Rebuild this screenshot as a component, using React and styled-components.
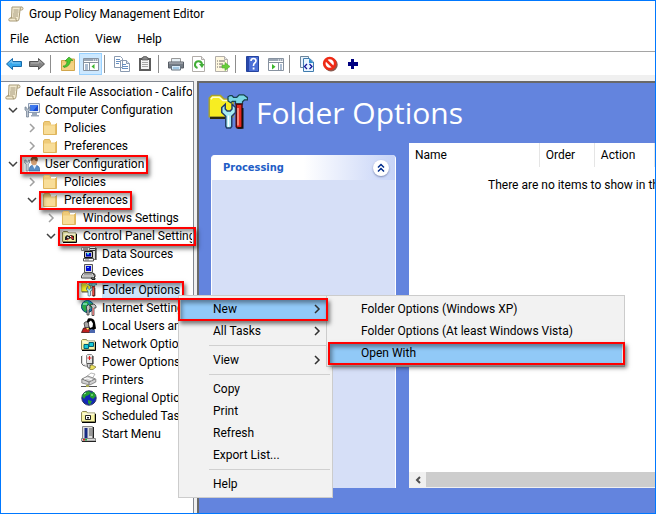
import React, { useState } from 'react'
import styled, { createGlobalStyle, css } from 'styled-components'

const colors = {
  frame: '#0078ff',
  chrome: '#f0f0f0',
  line: '#828790',
  blue: '#6384de',
  panel: '#d6dff7',
  hover: '#91c9f7',
  mark: '#ff0000',
}

const GlobalStyle = createGlobalStyle`
  * {
    box-sizing: border-box;
  }
  body {
    margin: 0;
    background: #ffffff;
    color: #000000;
    font-family: Roboto, 'Open Sans', sans-serif;
    font-size: 12px;
    line-height: 18px;
  }
  button {
    border: 0;
    padding: 0;
    background: none;
    color: inherit;
    font: inherit;
    text-align: left;
  }
  svg {
    display: block;
    flex: none;
  }
`

/* ---------- icons ---------- */

const Icon = ({ size = 16, children }) => (
  <svg width={size} height={size} viewBox="0 0 16 16" aria-hidden="true">
    {children}
  </svg>
)

const Scroll = () => (
  <Icon>
    <path d="M4 1h9.500q1.500 0 1.500 1.500T13.500 4H12l-1 9q-.3 2-2 2H2Q.5 15 .8 13.500 1 12 2.500 12H3.500z" fill="#f3ead0" stroke="#a89b78" />
    <path d="M12 4q0-3 1.500-3M2 12h6q-.5 3 1 3" fill="none" stroke="#a89b78" />
    <path d="M5.500 4h5M5.500 6h5M5 8h5M5 10h5" stroke="#8f8568" strokeWidth=".8" />
  </Icon>
)

const Folder = () => (
  <Icon>
    <path d="M.5 3V14.500h13V3.500H7.500L6.500 1.500h-5z" fill="#efcb79" stroke="#dfb65e" />
    <path d="M1 5.500h12V14H1z" fill="#f8dd98" />
    <path d="M8 3h5v1.500H8z" fill="#ffffff" />
    <path d="M12.500 4v10" stroke="#e5bd62" />
  </Icon>
)

const Computer = () => (
  <Icon>
    <path d="M4.500 1.500h11v9h-11z" fill="#e4ebf5" stroke="#8c9cb4" />
    <path d="M6 3h8v6H6z" fill="#1949d2" />
    <path d="M6 3h8l-5 6H6z" fill="#3d78ee" />
    <path d="M8 11h5v2h2v1.500H7V13h1z" fill="#9ba8ba" />
    <path d="M1 5v3l1.500 1v6h2V9L6 8V5H4.800v2H2.200V5z" fill="#bdc6d1" stroke="#68788c" strokeWidth=".7" />
  </Icon>
)

const User = () => (
  <Icon>
    <path d="M5 15q0-6 5-6 6 0 6 6z" fill="#5b8ec5" stroke="#366496" strokeWidth=".7" />
    <path d="M8.500 9l2 4 2-4z" fill="#eef5ff" />
    <ellipse cx="10" cy="5.500" rx="3" ry="3.800" fill="#d9a477" />
    <path d="M6.500 5Q6 .5 10.500.5T13.500 5.500Q11 5 10 3 9 5 6.500 5z" fill="#805331" />
    <path d="M.8 4v3l1.400 1v7h2V8l1.300-1V4H4.200v2H2.200V4z" fill="#dce3ea" stroke="#68788c" strokeWidth=".7" />
  </Icon>
)

const OldFolder = ({ children }) => (
  <>
    <path d="M.5 13.500V4.500l1-1h4l1 1.500h7.500v8.500z" fill="#f6f3a4" stroke="#8b8855" />
    <path d="M1.500 6h12" stroke="#ffffff" />
    <path d="M1 14.500h13.500V6" fill="none" stroke="#000000" />
    {children}
  </>
)

const ControlPanel = () => (
  <Icon>
    <OldFolder>
      <path d="M3 12V9l2-2 2 1 2-1 3 1v4h-2l-1-2-2 1-2 1z" fill="#202020" />
      <path d="M9 8l2 3M5 11l1 1" stroke="#d03030" strokeWidth="1.500" />
      <path d="M5 9l2 1M8 9l1-1" stroke="#ffffff" />
    </OldFolder>
  </Icon>
)

const DataSources = () => (
  <Icon>
    <path d="M.5 1.500h8v3h-8zM8.500.5h6v13h-6z" fill="#d9d9d9" stroke="#777777" />
    <path d="M15 2v12" stroke="#111111" />
    <path d="M9 2.500h5M9 4.500h5M2 3h5" stroke="#333333" />
    <path d="M3.500 5.500h8v6h-8z" fill="#c0c0c0" stroke="#111111" />
    <path d="M5 7h5v3.500H5z" fill="#0009c8" />
    <path d="M6 7h2v1.500H6z" fill="#44e8ee" />
    <path d="M2.500 12.500h10v2.500h-10z" fill="#ffffff" stroke="#555555" />
    <path d="M4 14h4" stroke="#777777" />
  </Icon>
)

const Devices = () => (
  <Icon>
    <path d="M3.500.5h8v8h-8z" fill="#dddddd" stroke="#555555" />
    <path d="M5 2h5v5H5z" fill="#0009d4" />
    <path d="M6 3h2v1H6z" fill="#6fb9ff" />
    <path d="M.5 12l2-3h9l2 3v2h-13z" fill="#dedede" stroke="#444444" />
    <path d="M3.500 10.500h8M2.500 12h9" stroke="#666666" strokeDasharray="1 1" />
    <path d="M12 9q3 1 2 4M10 14h4v1.500h-3z" fill="#aaaaaa" stroke="#000000" strokeWidth=".8" />
  </Icon>
)

const FolderTools = ({ size }) => (
  <Icon size={size}>
    <path d="M.5 9.500V2L1.500 1H5l1.500 1.500H10v7z" fill="#f7ed22" stroke="#aaa32a" strokeWidth=".6" />
    <path d="M1.200 2.500l.6-.8h2.700L6 3h3.500" fill="none" stroke="#ffffcb" strokeWidth=".6" />
    <path d="M.8 10h6.500" stroke="#2b2910" strokeWidth=".8" />
    <path d="M8 3.200V1.500l.8-.5h.8l.6.7h1.300l1-1h1.800l1.300 1h.2v1h-1.200l-.8.8v.8h-2.800v-1h-1.200l-.7.6z" fill="#79d7e5" stroke="#18424c" strokeWidth=".5" />
    <path d="M11.300 4.500h2.300v9l-.4.5h-1.500l-.4-.5z" fill="#e22a20" stroke="#500b0b" strokeWidth=".6" />
    <path d="M12 6v7" stroke="#ffc1b2" strokeWidth=".5" />
    <path d="M13.900 6v8h-2" fill="none" stroke="#111111" strokeWidth=".6" />
    <path d="M6.900 4.500L5.500 5.800v2l1.600 1.500v4l.4.700h1.500l.5-.6V9.300L11 7.800v-2L9.600 4.500v1.900l-.7.800H7.700l-.8-.8z" fill="#a5ebf3" stroke="#243c65" strokeWidth=".6" />
    <path d="M8.200 9v4.500" stroke="#ffffff" strokeWidth=".6" />
  </Icon>
)

const Internet = () => (
  <Icon>
    <circle cx="6.500" cy="6.500" r="6" fill="#1679b4" stroke="#09415d" />
    <path d="M2 3l4-2 2 2-3 3 2 3-3 3-3-5zM9 3l3 1-1 4-3-2z" fill="#28a844" />
    <path d="M2 4h4M7 8h3" stroke="#b4ffff" />
    <path d="M5.500 9V6.500l2-2 1.500 2v2.500l-1 1v5h-2v-5zM9 5l4-1 2 2v2h-2v7.500h-2V7z" fill="#c4c4c4" stroke="#222222" strokeWidth=".7" />
    <path d="M11.500 8h1.500v7h-1.500z" fill="#d77474" />
  </Icon>
)

const LocalUsers = () => (
  <Icon>
    <path d="M7 .5q6-1 7 4l1 6-3 2-4-1-3-6z" fill="#000000" />
    <path d="M8 4l2-1.500 2 3-.5 3.500L9 10 7 6z" fill="#ffffff" />
    <path d="M3 5q2-3 4.500 0l.5 5H4z" fill="#a9a6a6" stroke="#222222" strokeWidth=".7" />
    <path d="M.5 14.500l2-4.500H7l3 4.500z" fill="#bf2020" stroke="#260404" strokeWidth=".7" />
    <path d="M8 14l2-3 4 1v3H9z" fill="#4a67ae" />
    <path d="M5 10l2 2 1-2z" fill="#fff066" />
  </Icon>
)

const Network = () => (
  <Icon>
    <OldFolder>
      <path d="M3 8.500h4.500v4H3zM8 6.500h4.500v4H8z" fill="#15c9d7" stroke="#075f71" />
    </OldFolder>
  </Icon>
)

const Power = () => (
  <Icon>
    <path d="M5.500 1.500l1-1h4l1 1v8h-6z" fill="#e5e5e5" stroke="#888888" />
    <path d="M12 2v8H6" fill="none" stroke="#222222" />
    <path d="M8.500 2v4M6.500 4h4" stroke="#e02020" />
    <path d="M.5 2v7q1 3 4 3h5" fill="none" stroke="#666666" />
    <path d="M1.500 1v8q1 2 4 2h4" fill="none" stroke="#dddddd" />
    <path d="M8 12l3-1 4 2-3 2.500H9z" fill="#ece15e" stroke="#77702d" strokeWidth=".7" />
    <path d="M6 10l1 4h2v-3" fill="#dddddd" stroke="#333333" strokeWidth=".7" />
  </Icon>
)

const Printer = () => (
  <Icon>
    <path d="M5 5l5-4 4 1-3 5z" fill="#ffffff" stroke="#999999" strokeWidth=".7" />
    <path d="M.8 7l6-3 8 3v3l-6 3-8-2z" fill="#d2d2d2" stroke="#777777" strokeWidth=".8" />
    <path d="M1 7l7 3 6-3M8 10v3" fill="none" stroke="#777777" />
    <path d="M3 7l3-1 5 2" fill="none" stroke="#ffffff" />
    <path d="M0 14.500h16" stroke="#555555" />
    <path d="M5 13h3v2H5z" fill="#aaaa55" />
  </Icon>
)

const Globe = () => (
  <Icon>
    <circle cx="8" cy="8" r="7.200" fill="#1428b5" stroke="#303863" />
    <path d="M3 3l4-2 3 1-2 3-3 1-2 3-2-3zM9 3l4-1 2 4-3 3-3-2zM7 10l4 1-2 4-2-2z" fill="#249e31" />
    <path d="M3 4l2-1M10 5h2" stroke="#a9f3b0" />
  </Icon>
)

const Scheduled = () => (
  <Icon>
    <OldFolder>
      <path d="M4.500 7.500h5v4h-5z" fill="#ffffff" stroke="#222222" />
      <path d="M6 9h2v1.500H6z" fill="#222222" />
    </OldFolder>
  </Icon>
)

const StartMenu = () => (
  <Icon>
    <path d="M1.500.5h10v12h-10z" fill="#dddddd" stroke="#888888" />
    <path d="M12.500 1v12" stroke="#222222" />
    <path d="M3.500 2h3v10h-3z" fill="#172b83" />
    <path d="M8 3h3M8 5h3M8 7h3M8 9h3" stroke="#555555" />
    <path d="M.5 12.500h14v2.500H.5z" fill="#d9d9d9" stroke="#888888" />
    <path d="M1 15.500h14" stroke="#222222" />
    <path d="M2 13h2v1.500H2z" fill="#e02020" />
    <path d="M4 13h2v1.500H4z" fill="#20b040" />
  </Icon>
)

const Arrow = ({ fill, stroke, back }) => (
  <Icon>
    <path
      d={back ? 'M.5 8l6-5.500v3h9v5h-9v3z' : 'M15.500 8l-6-5.500v3h-9v5h9v3z'}
      fill={fill}
      stroke={stroke}
      strokeLinejoin="round"
    />
    <path d={back ? 'M3 7.500l3-3v2.500h8' : 'M2 7h8V4.500l3 3'} fill="none" stroke="#ffffff" opacity=".4" />
  </Icon>
)

const FolderUp = () => (
  <Icon>
    <path d="M1.500 14.500V4.500h5l1-1.500h7v11.500z" fill="#f1cb75" stroke="#d1a64c" />
    <path d="M2 7h12v7H2z" fill="#f4d384" />
    <path d="M3 10q4 0 4-5H5l4-4 4 3.500h-2.500Q10 10.500 4 11.500z" fill="#4bc831" stroke="#249219" strokeWidth=".6" />
  </Icon>
)

const Pane = ({ tree }) => (
  <Icon>
    <path d="M.5 2.500h15v12H.5z" fill="#ffffff" stroke="#8792a0" />
    <path d="M1 3h14v2H1z" fill="#9ba6b4" />
    <path d="M10 4h1M12 4h1M14 4h1" stroke="#ffffff" />
    <path d="M1 6.500h14" stroke="#8792a0" />
    {tree ? (
      <>
        <path d="M6.500 7v7" stroke="#8792a0" />
        <path d="M2 9h3M2 11h3M2 13h3" stroke="#5b7ca7" />
        <path d="M11.500 8v5L8.500 10.500z" fill="#39b62b" />
      </>
    ) : (
      <>
        <path d="M10.500 7v7" stroke="#8792a0" />
        <path d="M12 9h2M12 11h2M12 13h2" stroke="#5b7ca7" />
        <path d="M4 8v5.500l3.500-2.800z" fill="#39b62b" />
      </>
    )}
  </Icon>
)

const Copy = () => (
  <Icon>
    <path d="M.5.5h6l2 2v9h-8zM6.500 4.500h6l3 3v8h-9z" fill="#ffffff" stroke="#8a9ab0" />
    <path d="M2 3.500h4M2 5.500h4M2 7.500h3M8 8.500h4M8 10.500h6M8 12.500h6" stroke="#6790c2" />
    <path d="M12.500 4.500v3h3" fill="#d9e5f2" stroke="#8a9ab0" />
  </Icon>
)

const Clipboard = () => (
  <Icon>
    <path d="M2 2h12v13H2z" fill="#5c5c5c" />
    <path d="M4 4h8v9H4z" fill="#f4f4f4" />
    <path d="M5 1.500h1.500V.5h3v1H11V4H5z" fill="#888888" stroke="#555555" strokeWidth=".7" />
    <path d="M5 6.500h6M5 8.500h6M5 10.500h6" stroke="#a5a5a5" />
  </Icon>
)

const ToolPrinter = () => (
  <Icon>
    <path d="M3.500 2.500h9v4h-9z" fill="#e8f0f5" stroke="#999999" />
    <path d="M.5 6h15v6H.5z" fill="#747b84" stroke="#575d65" />
    <path d="M1 7h14" stroke="#b7bcc2" />
    <path d="M3.500 9.500h9v4.500h-9z" fill="#d9ebf8" stroke="#67737f" />
    <path d="M5 12h6" stroke="#6aa5d0" />
  </Icon>
)

const Paper = ({ children, fill = '#ffffff' }) => (
  <>
    <path d="M1.500.5h9l3 3v12h-12z" fill={fill} stroke="#b2aeaa" />
    <path d="M10.500.5v3h3" fill="#e8e8e8" stroke="#b2aeaa" />
    {children}
  </>
)

const Refresh = () => (
  <Icon>
    <Paper>
      <path d="M6.500 12A3.500 3.500 0 1 1 11 8.500" fill="none" stroke="#41ad36" strokeWidth="2" />
      <path d="M13.500 8H8l3 4z" fill="#41ad36" />
    </Paper>
  </Icon>
)

const Export = () => (
  <Icon>
    <Paper fill="#fff8df">
      <path d="M3 5h1M3 8h1M3 11h1M5 5h6M5 8h4M5 11h3" stroke="#6e6a69" />
      <path d="M8 9h3V6.500l5 4-5 4V12H8z" fill="#66ce38" stroke="#54ad36" strokeWidth=".6" />
    </Paper>
  </Icon>
)

const Help = () => (
  <Icon>
    <path d="M1.500.5h12v15h-12z" fill="#4c6fd6" stroke="#24439e" />
    <path d="M2 1h2v14H2z" fill="#2747aa" />
    <path d="M6 5q0-2.500 2.500-2.500T11 5q0 1-1.300 2T8.500 10" fill="none" stroke="#ffffff" strokeWidth="1.600" />
    <path d="M7.700 11.500h1.800v2H7.700z" fill="#ffffff" />
  </Icon>
)

const Xml = () => (
  <Icon>
    <path d="M1.500.5h8v11h-8z" fill="#e9f3fd" stroke="#6d879d" />
    <path d="M4.500 2.500h6l4 3.500v9.500h-10z" fill="#e8f5ff" stroke="#407cae" />
    <path d="M10 2.500L14.500 7H10z" fill="#308dcc" />
    <path d="M8 8l-2.500 2.500L8 13M10.500 8l2.500 2.500-2.500 2.500" fill="none" stroke="#15169a" strokeWidth="1.300" />
  </Icon>
)

const Stop = () => (
  <Icon>
    <circle cx="9" cy="8.700" r="5.500" fill="none" stroke="#8b5a50" strokeWidth="2.500" />
    <circle cx="7.700" cy="7.500" r="5.500" fill="#ffffff" stroke="#ef2b16" strokeWidth="2.700" />
    <path d="M4 4l7 7" stroke="#ef2b16" strokeWidth="2.500" />
  </Icon>
)

const Plus = () => (
  <Icon>
    <path d="M6 3h3v3h4v4H9v3H6v-3H3V6h3z" fill="#000080" />
  </Icon>
)

const Chevron = ({ open, color = '#a0a0a0' }) => (
  <svg width="10" height="10" viewBox="0 0 10 10" aria-hidden="true">
    <path d={open ? 'M1 3l4 4 4-4' : 'M3 1l4 4-4 4'} fill="none" stroke={open ? '#404040' : color} strokeWidth="1.500" />
  </svg>
)

/* ---------- window ---------- */

const Window = styled.div`
  position: relative;
  display: flex;
  flex-direction: column;
  min-height: 100vh;
  border: 1px solid ${colors.frame};
  background: ${colors.chrome};
  overflow: hidden;
`

const TitleBar = styled.header`
  display: flex;
  align-items: center;
  gap: 5px;
  height: 26px;
  padding-left: 7px;
  background: #ffffff;
`

const Title = styled.h1`
  margin: 0;
  font-size: 12px;
  font-weight: 400;
`

const MenuBar = styled.nav`
  display: flex;
  align-items: center;
  gap: 16px;
  height: 24px;
  padding: 0 9px;
  background: #ffffff;
`

const Toolbar = styled.div`
  display: flex;
  align-items: center;
  height: 24px;
  padding-left: 1px;
  border-top: 1px solid #a5a5a5;
  background: #ffffff;
`

const ToolButton = styled.button`
  display: grid;
  place-items: center;
  width: 23px;
  height: 22px;
  ${props => props.$active && css`
    border: 1px solid #99d1ff;
    background: #cce8ff;
  `}
`

const Separator = styled.span`
  width: 1px;
  height: 18px;
  margin: 0 5px 0 2px;
  background: #8d8d8d;
`

const Body = styled.main`
  display: flex;
  flex: 1;
  gap: 3px;
  margin-top: 6px;
`

/* ---------- tree ---------- */

const Tree = styled.ul`
  width: 193px;
  margin: 0;
  padding: 1px 0 0;
  list-style: none;
  border-top: 1px solid ${colors.line};
  border-right: 1px solid ${colors.line};
  background: #ffffff;
`

const Row = styled.li`
  display: flex;
  align-items: center;
  gap: 6px;
  height: 18px;
  padding-left: ${props => (props.$level ? props.$level * 19 - 12 : 4)}px;
  padding-right: 1px;
`

const Toggle = styled.span`
  width: 10px;
  flex: none;
`

const Mark = styled.span`
  position: absolute;
  inset: 0 -4px -1px;
  border: 2px solid ${colors.mark};
  box-shadow: 2px 3px 4px rgba(0, 0, 0, 0.5), inset 2px 3px 4px rgba(0, 0, 0, 0.4);
  pointer-events: none;
`

const MenuMark = styled(Mark)`
  z-index: 1;
  inset: ${props => (props.$nested ? '0 -3px -1px -1px' : '0 2px -1px -3px')};
`

const Node = styled.button`
  position: relative;
  display: flex;
  align-items: center;
  gap: 5px;
  min-width: 0;
  height: 18px;
`

const NodeText = styled.span`
  overflow: hidden;
  white-space: nowrap;
  background: ${props => (props.$selected ? '#cce4fa' : 'transparent')};
`

const nodes = [
  { level: 0, icon: Scroll, label: 'Default File Association - Califo' },
  { level: 1, icon: Computer, label: 'Computer Configuration', open: true },
  { level: 2, icon: Folder, label: 'Policies', open: false },
  { level: 2, icon: Folder, label: 'Preferences', open: false },
  { level: 1, icon: User, label: 'User Configuration', open: true, marked: true },
  { level: 2, icon: Folder, label: 'Policies', open: false },
  { level: 2, icon: Folder, label: 'Preferences', open: true, marked: true },
  { level: 3, icon: Folder, label: 'Windows Settings', open: false },
  { level: 3, icon: ControlPanel, label: 'Control Panel Setting', open: true, marked: true },
  { level: 4, icon: DataSources, label: 'Data Sources' },
  { level: 4, icon: Devices, label: 'Devices' },
  { level: 4, icon: FolderTools, label: 'Folder Options', marked: true },
  { level: 4, icon: Internet, label: 'Internet Setting' },
  { level: 4, icon: LocalUsers, label: 'Local Users and' },
  { level: 4, icon: Network, label: 'Network Options' },
  { level: 4, icon: Power, label: 'Power Options' },
  { level: 4, icon: Printer, label: 'Printers' },
  { level: 4, icon: Globe, label: 'Regional Options' },
  { level: 4, icon: Scheduled, label: 'Scheduled Tasks' },
  { level: 4, icon: StartMenu, label: 'Start Menu' },
]

const TreeView = () => {
  const [selected, setSelected] = useState(11)
  return (
    <Tree>
      {nodes.map(({ level, icon: NodeIcon, label, open, marked }, i) => (
        <Row key={i} $level={level}>
          {level > 0 && <Toggle>{open !== undefined && <Chevron open={open} />}</Toggle>}
          <Node type="button" onClick={() => setSelected(i)}>
            <NodeIcon />
            <NodeText $selected={selected === i}>{label}</NodeText>
            {marked && <Mark />}
          </Node>
        </Row>
      ))}
    </Tree>
  )
}

/* ---------- details ---------- */

const Details = styled.section`
  display: flex;
  flex: 1;
  flex-direction: column;
  min-width: 0;
  border-top: 2px solid #696969;
  border-left: 2px solid #696969;
  background: ${colors.blue};
`

const Heading = styled.div`
  display: flex;
  align-items: center;
  gap: 8px;
  height: 60px;
  padding-left: 9px;
  color: #ffffff;
`

const HeadingText = styled.h2`
  margin: 0;
  font-family: 'Open Sans', 'Noto Sans', sans-serif;
  font-size: 30px;
  font-weight: 400;
  line-height: 40px;
`

const Columns = styled.div`
  display: flex;
  flex: 1;
  gap: 13px;
  padding: 0 0 25px 12px;
`

const Processing = styled.section`
  width: 185px;
  margin-top: 12px;
  border: 1px solid #ffffff;
  border-top: 0;
  border-bottom: 0;
  border-radius: 4px 4px 0 0;
  background: ${colors.panel};
  overflow: hidden;
`

const ProcessingHeader = styled.header`
  display: flex;
  align-items: center;
  justify-content: space-between;
  height: 25px;
  padding: 0 6px 0 11px;
  background: linear-gradient(to right, #ffffff 50%, #c6d3f7);
`

const ProcessingTitle = styled.h3`
  margin: 0;
  color: #215dc6;
  font-family: 'DejaVu Sans Condensed', 'DejaVu Sans', sans-serif;
  font-size: 11px;
  font-weight: 700;
`

const Collapse = styled.button`
  display: grid;
  place-items: center;
  width: 16px;
  height: 16px;
  border-radius: 50%;
  background: #ffffff;
  box-shadow: 0 1px 2px #7f8cb5;
`

const List = styled.div`
  display: flex;
  flex: 1;
  flex-direction: column;
  min-width: 0;
  background: #ffffff;
  overflow: hidden;
`

const Table = styled.table`
  width: 100%;
  table-layout: fixed;
  border-collapse: collapse;
`

const HeadCell = styled.th`
  width: ${props => props.$width}px;
  height: 24px;
  padding: 0 0 0 6px;
  border-right: 1px solid #e5e5e5;
  font-weight: 400;
  text-align: left;
`

const EmptyCell = styled.td`
  height: 36px;
  padding: 0 0 0 79px;
  white-space: nowrap;
`

const ScrollBar = styled.div`
  display: flex;
  height: 16px;
  margin-top: auto;
  background: ${colors.chrome};
`

const ScrollButton = styled.button`
  display: grid;
  place-items: center;
  width: 17px;
`

const Thumb = styled.div`
  flex: 1;
  margin-bottom: 1px;
  background: #cdcdcd;
`

/* ---------- context menus ---------- */

const Menu = styled.div`
  position: absolute;
  top: 294px;
  left: ${props => props.$left}px;
  width: ${props => props.$width}px;
  padding: 2px;
  border: 1px solid #cccccc;
  background: #f2f2f2;
`

const MenuItem = styled.button`
  position: relative;
  display: flex;
  align-items: center;
  justify-content: space-between;
  width: 100%;
  height: 22px;
  padding: 0 8px 0 32px;
  white-space: nowrap;
  background: ${props => (props.$active ? colors.hover : 'transparent')};
`

const Divider = styled.hr`
  height: 1px;
  margin: 3px 0 3px 28px;
  border: 0;
  background: #d0d0d0;
`

const menuItems = [
  { label: 'New', sub: true, active: true },
  { label: 'All Tasks', sub: true },
  null,
  { label: 'View', sub: true },
  null,
  { label: 'Copy' },
  { label: 'Print' },
  { label: 'Refresh' },
  { label: 'Export List...' },
  null,
  { label: 'Help' },
]

const newItems = [
  { label: 'Folder Options (Windows XP)' },
  { label: 'Folder Options (At least Windows Vista)' },
  { label: 'Open With', active: true },
]

const ContextMenu = ({ items, left, width, nested }) => (
  <Menu role="menu" $left={left} $width={width}>
    {items.map((item, i) =>
      item ? (
        <MenuItem key={i} type="button" role="menuitem" $active={item.active}>
          {item.label}
          {item.sub && <Chevron color="#303030" />}
          {item.active && <MenuMark $nested={nested} />}
        </MenuItem>
      ) : (
        <Divider key={i} />
      )
    )}
  </Menu>
)

const tools = [
  ['Back', <Arrow back fill="#36a7eb" stroke="#1769a8" />],
  ['Forward', <Arrow fill="#858585" stroke="#555555" />],
  null,
  ['Up', <FolderUp />],
  ['Show console tree', <Pane tree />, true],
  null,
  ['Copy', <Copy />],
  ['Paste', <Clipboard />],
  null,
  ['Print', <ToolPrinter />],
  ['Refresh', <Refresh />],
  ['Export list', <Export />],
  null,
  ['Help', <Help />],
  ['Show action pane', <Pane />],
  null,
  ['Display XML', <Xml />],
  ['Disable', <Stop />],
  ['Add', <Plus />],
]

const App = () => (
  <>
    <GlobalStyle />
    <Window>
      <TitleBar>
        <Scroll />
        <Title>Group Policy Management Editor</Title>
      </TitleBar>
      <MenuBar>
        {['File', 'Action', 'View', 'Help'].map(name => (
          <button key={name} type="button">{name}</button>
        ))}
      </MenuBar>
      <Toolbar role="toolbar">
        {tools.map((tool, i) =>
          tool ? (
            <ToolButton key={i} type="button" aria-label={tool[0]} $active={tool[2]}>{tool[1]}</ToolButton>
          ) : (
            <Separator key={i} />
          )
        )}
      </Toolbar>
      <Body>
        <TreeView />
        <Details>
          <Heading>
            <FolderTools size={40} />
            <HeadingText>Folder Options</HeadingText>
          </Heading>
          <Columns>
            <Processing>
              <ProcessingHeader>
                <ProcessingTitle>Processing</ProcessingTitle>
                <Collapse type="button" aria-label="Collapse">
                  <svg width="8" height="10" viewBox="0 0 8 10" aria-hidden="true">
                    <path d="M1 4.500l3-3 3 3M1 8.500l3-3 3 3" fill="none" stroke="#002c8c" strokeWidth="1.500" />
                  </svg>
                </Collapse>
              </ProcessingHeader>
            </Processing>
            <List>
              <Table>
                <thead>
                  <tr>
                    <HeadCell $width={130}>Name</HeadCell>
                    <HeadCell $width={55}>Order</HeadCell>
                    <HeadCell $width={60}>Action</HeadCell>
                  </tr>
                </thead>
                <tbody>
                  <tr>
                    <EmptyCell colSpan={3}>There are no items to show in th</EmptyCell>
                  </tr>
                </tbody>
              </Table>
              <ScrollBar>
                <ScrollButton type="button" aria-label="Scroll left">
                  <svg width="8" height="8" viewBox="0 0 8 8" aria-hidden="true">
                    <path d="M6 1L3 4l3 3" fill="none" stroke="#505050" strokeWidth="2" />
                  </svg>
                </ScrollButton>
                <Thumb />
              </ScrollBar>
            </List>
          </Columns>
        </Details>
      </Body>
      <ContextMenu items={menuItems} left={177} width={155} />
      <ContextMenu items={newItems} left={325} width={299} nested />
    </Window>
  </>
)

export default App
